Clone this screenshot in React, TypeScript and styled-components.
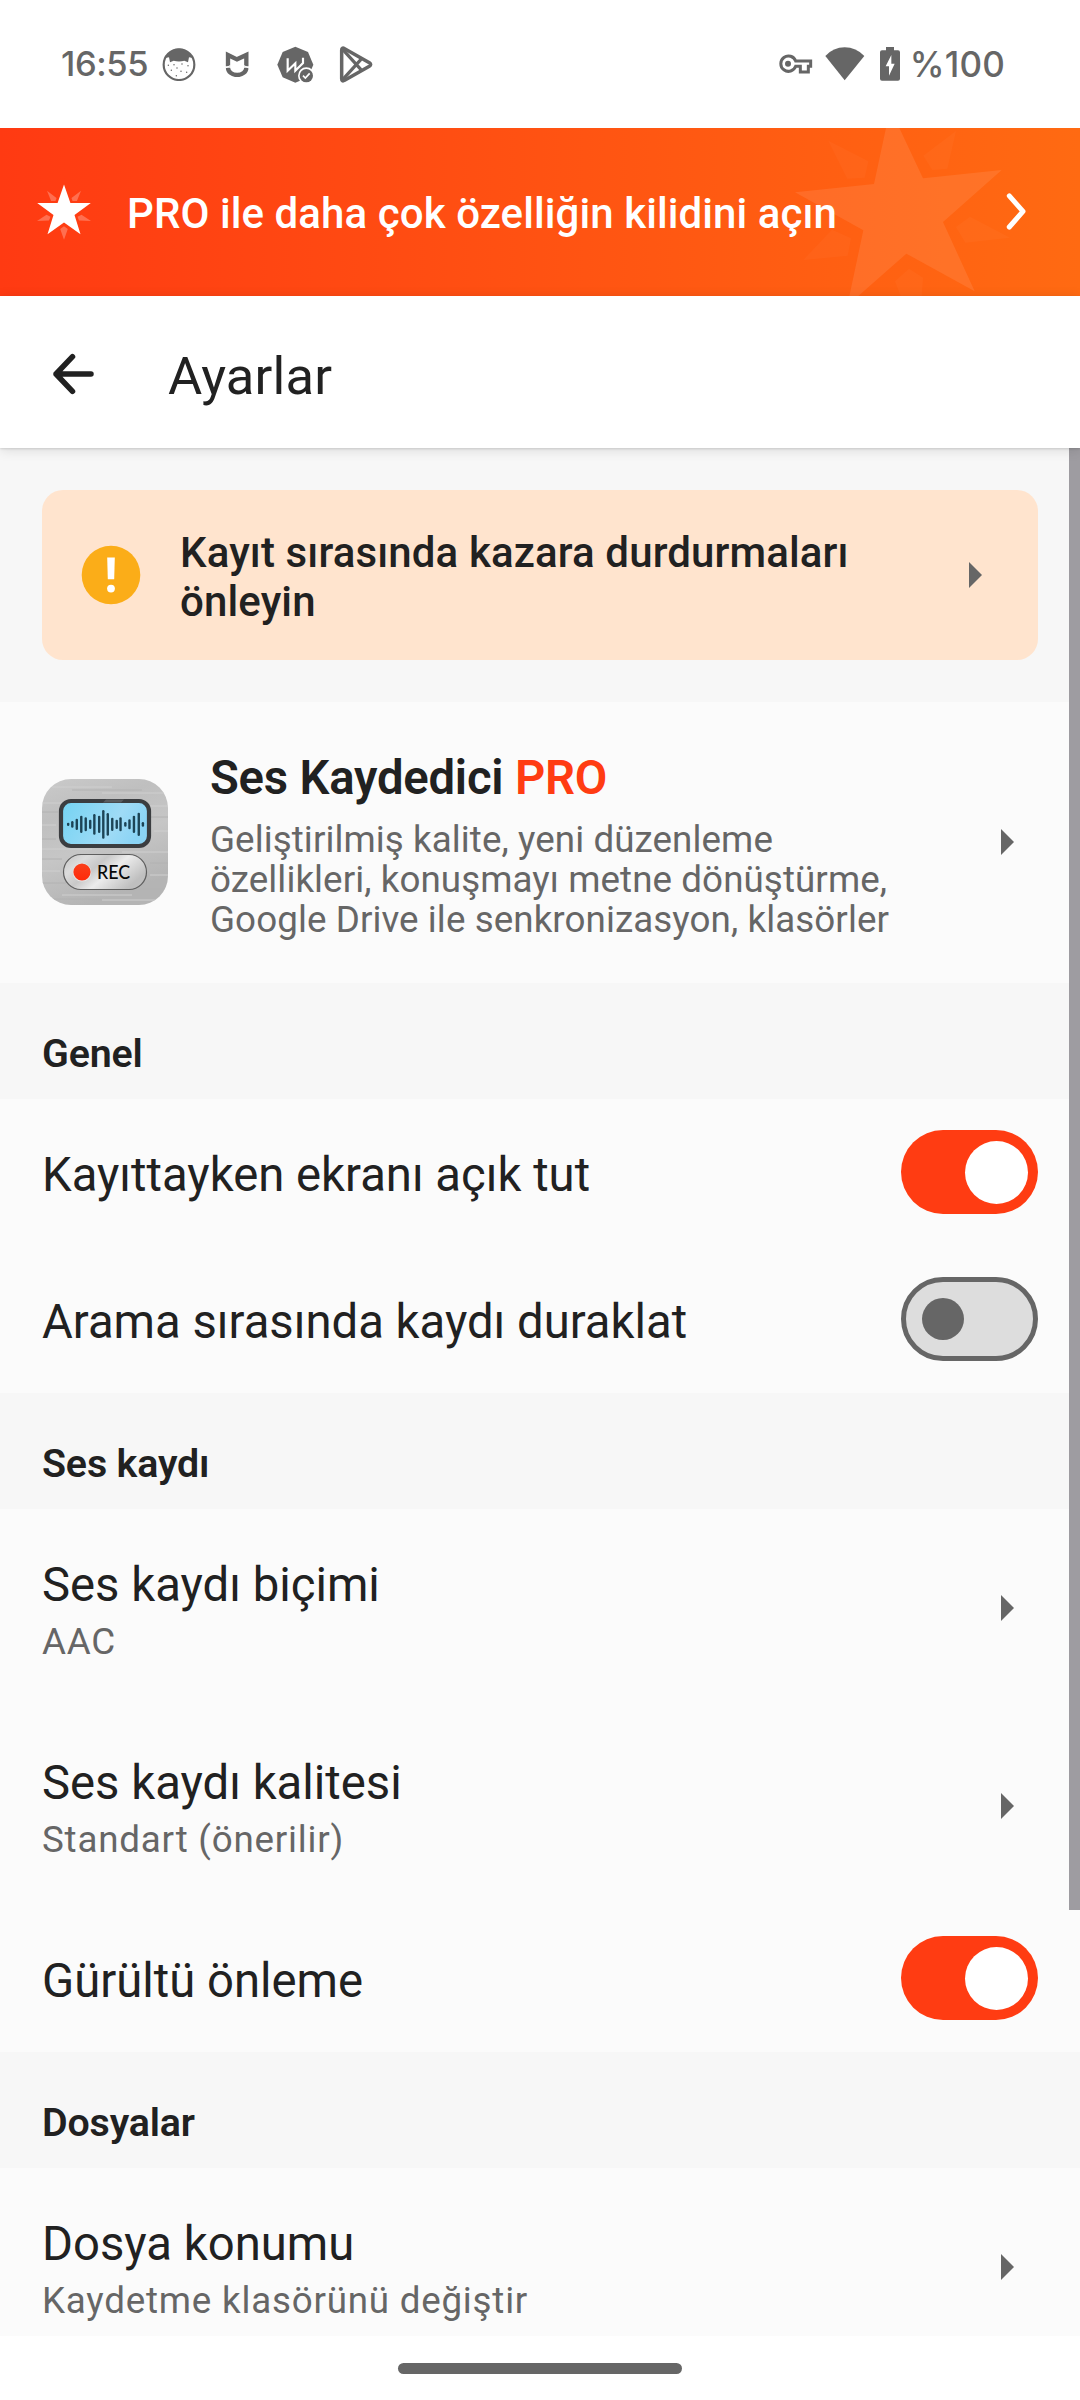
import React from "react";
import styled, { createGlobalStyle } from "styled-components";

const ink = "#212121";
const muted = "#666666";
const accent = "#ff3c12";

const GlobalStyle = createGlobalStyle`
  * { box-sizing: border-box; }
  body { margin: 0; background: #fff; font-family: Roboto, "Noto Sans", sans-serif; }
  svg { display: block; flex: none; }
`;

const Screen = styled.div`
  width: 1080px;
  height: 2400px;
  display: flex;
  flex-direction: column;
  overflow: hidden;
  background: #fff;
`;

const StatusBar = styled.header`
  flex: none;
  height: 128px;
  padding: 0 75px 0 61px;
  display: flex;
  justify-content: space-between;
`;

const StatusSide = styled.div`
  height: 128px;
  display: flex;
  align-items: center;
`;

const StatusText = styled.span<{ $size: number; $spacing: number; $end?: number }>`
  margin-left: ${(p) => (p.$end ? p.$end : 0)}px;
  font-family: Inter, Roboto, sans-serif;
  font-weight: 500;
  font-size: ${(p) => p.$size}px;
  line-height: 42px;
  letter-spacing: ${(p) => p.$spacing}px;
  color: ${muted};
`;

const StatusIcon = styled.svg<{ $gap: number }>`
  margin-left: ${(p) => p.$gap}px;
`;

const Banner = styled.section`
  flex: none;
  position: relative;
  height: 168px;
  overflow: hidden;
  display: flex;
  padding: 0 54px 0 36px;
  background: linear-gradient(90deg, #ff3a12 0%, #ff6a12 100%);
`;

const BannerArt = styled.svg`
  position: absolute;
  top: 0;
  right: 0;
`;

const BannerStar = styled.svg`
  margin-top: 56px;
`;

const BannerText = styled.div`
  flex: 1;
  margin: 61px 0 0 35px;
  font-size: 42px;
  line-height: 50px;
  font-weight: 500;
  letter-spacing: 0.08px;
  color: #fff;
  white-space: nowrap;
`;

const BannerChevron = styled.svg`
  position: relative;
  margin-top: 64px;
`;

const Toolbar = styled.nav`
  flex: none;
  position: relative;
  z-index: 2;
  height: 152px;
  display: flex;
  padding: 0 51px;
  background: #fff;
  box-shadow: 0 1px 2px rgba(0, 0, 0, 0.12), 0 2px 12px rgba(0, 0, 0, 0.12);
`;

const BackIcon = styled.svg`
  margin-top: 56px;
`;

const Title = styled.h1`
  margin: 50px 0 0 73px;
  font-size: 52.5px;
  line-height: 60px;
  font-weight: 400;
  letter-spacing: 0.2px;
  color: ${ink};
`;

const Content = styled.main`
  flex: none;
  position: relative;
  height: 1888px;
  overflow: hidden;
  background: #fbfbfb;
`;

const ScrollThumb = styled.div`
  position: absolute;
  top: 0;
  right: 0;
  width: 11px;
  height: 1462px;
  background: #9e9ca1;
`;

const NoticeArea = styled.div`
  height: 254px;
  padding: 42px 42px 0;
  background: #f7f7f7;
`;

const Notice = styled.div`
  height: 170px;
  border-radius: 21px;
  background: #ffe4ce;
  display: flex;
  align-items: center;
  padding: 0 56px 0 39px;
`;

const NoticeText = styled.div`
  flex: 1;
  margin: 4px 0 0 39px;
  font-size: 42px;
  line-height: 49px;
  font-weight: 500;
  letter-spacing: 0.13px;
  color: ${ink};
`;

const ProRow = styled.div`
  height: 281px;
  display: flex;
  align-items: center;
  padding: 0 66px 1px 42px;
`;

const ProBody = styled.div`
  flex: 1;
  align-self: flex-start;
  padding-top: 48px;
  margin-left: 42px;
`;

const ProTitle = styled.div`
  font-size: 47.25px;
  line-height: 56px;
  font-weight: 600;
  letter-spacing: -0.22px;
  color: ${ink};
`;

const Highlight = styled.span`
  color: ${accent};
`;

const ProText = styled.div`
  margin-top: 14px;
  font-size: 36.75px;
  line-height: 40px;
  letter-spacing: 0.08px;
  color: ${muted};
  white-space: nowrap;
`;

const GroupHeader = styled.h2`
  height: 116px;
  margin: 0;
  padding: 48px 42px 0;
  background: #f7f7f7;
  font-size: 39.375px;
  line-height: 46px;
  font-weight: 600;
  letter-spacing: -0.16px;
  color: ${ink};
`;

const Row = styled.div<{ $height: number; $end: number }>`
  height: ${(p) => p.$height}px;
  display: flex;
  align-items: center;
  padding: 0 ${(p) => p.$end}px 1px 42px;
`;

const RowBody = styled.div`
  flex: 1;
  align-self: flex-start;
  padding-top: 48px;
`;

const RowTitle = styled.div`
  font-size: 47.25px;
  line-height: 56px;
  color: ${ink};
`;

const RowSub = styled.div`
  margin-top: 7px;
  font-size: 36.75px;
  line-height: 44px;
  letter-spacing: 0.78px;
  color: ${muted};
`;

const Track = styled.span<{ $on: boolean }>`
  flex: none;
  width: 137px;
  height: 84px;
  border-radius: 42px;
  display: flex;
  align-items: center;
  justify-content: ${(p) => (p.$on ? "flex-end" : "flex-start")};
  padding: 0 ${(p) => (p.$on ? 10.5 : 16)}px;
  background: ${(p) => (p.$on ? accent : "#dddddd")};
  border: ${(p) => (p.$on ? "none" : `5px solid ${muted}`)};
`;

const Knob = styled.span<{ $on: boolean }>`
  width: ${(p) => (p.$on ? 63 : 42)}px;
  height: ${(p) => (p.$on ? 63 : 42)}px;
  border-radius: 50%;
  background: ${(p) => (p.$on ? "#fff" : muted)};
`;

const NavBar = styled.footer`
  flex: 1;
  display: flex;
  justify-content: center;
  padding-top: 27px;
  background: #fff;
`;

const NavPill = styled.span`
  width: 284px;
  height: 11px;
  border-radius: 5.5px;
  background: ${muted};
`;

const Arrow = () => (
  <svg width="13" height="26" viewBox="0 0 13 26">
    <path d="M0 0L13 13L0 26Z" fill={muted} />
  </svg>
);

const Switch = ({ on }: { on: boolean }) => (
  <Track $on={on}>
    <Knob $on={on} />
  </Track>
);

const CatIcon = () => (
  <StatusIcon $gap={14} width="34" height="34" viewBox="367 51 102 102">
    <circle cx="418" cy="104" r="46" fill="#fff" stroke={muted} strokeWidth="6.5" />
    <path d="M376 84C388 62 404 56 418 56S448 62 460 84L448 82L445 97L434 92C424 95 412 95 402 92L391 97L388 82Z" fill={muted} />
    <g fill={muted}>
      <circle cx="386" cy="106" r="2.2" /><circle cx="403" cy="104" r="2.2" /><circle cx="427" cy="102" r="2.2" />
      <circle cx="445" cy="107" r="2.2" /><circle cx="395" cy="121" r="2.2" /><circle cx="412" cy="114" r="2.2" />
      <circle cx="424" cy="124" r="2.2" /><circle cx="441" cy="127" r="2.2" /><circle cx="410" cy="137" r="2.2" />
    </g>
  </StatusIcon>
);

const MiIcon = () => (
  <StatusIcon $gap={29} width="24" height="26" viewBox="555 63 72 78">
    <path d="M564 109V75L591 88L619 75V109" fill="none" stroke={muted} strokeWidth="13" />
    <path d="M564 113A27.500 22 0 0 0 619 113" fill="none" stroke={muted} strokeWidth="13" />
    <path d="M556 114L572 106M610 106L627 114" stroke="#fff" strokeWidth="3" />
  </StatusIcon>
);

const WIcon = () => (
  <StatusIcon $gap={28} width="37" height="37" viewBox="710 49 111 111">
    <path d="M765 51L803 67L819 105L803 143L765 159L727 143L711 105L727 67Z" fill={muted} />
    <path d="M742 86V123L765 101V123L788 100V84" fill="none" stroke="#fff" strokeWidth="6.5" />
    <circle cx="798" cy="138" r="25" fill="#fff" />
    <circle cx="798" cy="138" r="20" fill={muted} />
    <path d="M788 138L795 145L808 131" fill="none" stroke="#fff" strokeWidth="5" />
  </StatusIcon>
);

const PlayIcon = () => (
  <StatusIcon $gap={25} width="35" height="37" viewBox="896 49 105 111">
    <path d="M904 62V147Q904 157 913 152L987 110Q995 105 987 99L913 57Q904 52 904 62Z" fill="none" stroke={muted} strokeWidth="10.500" />
    <path d="M907 150L962 89M907 59L962 120" fill="none" stroke={muted} strokeWidth="9.500" />
  </StatusIcon>
);

const KeyIcon = () => (
  <svg width="34" height="20" viewBox="57 74 102 60">
    <path d="M107 95H152V111H145V128H121V111H107A23 23 0 1 1 107 95Z" fill="none" stroke={muted} strokeWidth="9" />
    <circle cx="84" cy="103" r="9" fill={muted} />
  </svg>
);

const WifiIcon = () => (
  <StatusIcon $gap={12} width="40" height="34" viewBox="194 49 120 102">
    <path d="M195 76Q219 50 253 50T312 76L253 149Z" fill={muted} />
  </StatusIcon>
);

const BatteryIcon = () => (
  <StatusIcon $gap={15} width="20" height="34" viewBox="360 48 60 102">
    <path d="M378 48H402V58H414Q420 58 420 64V143Q420 149 414 149H366Q360 149 360 143V64Q360 58 366 58H378Z" fill={muted} />
    <path d="M394 72L377 106H387V134L404 98H394Z" fill="#fff" />
  </StatusIcon>
);

/* Waveform bars on the recorder display: position and half height. */
const WAVE: [number, number][] = [
  [198, 5], [210, 10], [223, 17], [236, 26], [249, 21], [262, 14], [274, 31], [288, 26], [300, 43],
  [313, 34], [326, 20], [339, 14], [350, 21], [364, 7], [376, 15], [389, 26], [403, 35], [415, 7],
];

const AppIcon = () => (
  <svg width="126" height="126" viewBox="0 0 126 126">
    <defs>
      <linearGradient id="metal" x1="0" y1="0" x2="0.35" y2="1">
        <stop offset="0" stopColor="#cacaca" />
        <stop offset="0.3" stopColor="#bfbfbf" />
        <stop offset="0.6" stopColor="#c6c6c6" />
        <stop offset="1" stopColor="#b4b4b4" />
      </linearGradient>
      <linearGradient id="screen" x1="0" y1="0" x2="1" y2="0.3">
        <stop offset="0" stopColor="#74d3f2" />
        <stop offset="0.7" stopColor="#9fdbf6" />
        <stop offset="1" stopColor="#8bd4f5" />
      </linearGradient>
      <linearGradient id="button" x1="0" y1="0" x2="1" y2="0.5">
        <stop offset="0" stopColor="#c4c4c4" />
        <stop offset="0.25" stopColor="#dcdcdc" />
        <stop offset="0.45" stopColor="#c8c8c8" />
        <stop offset="0.65" stopColor="#ececec" />
        <stop offset="1" stopColor="#bfbfbf" />
      </linearGradient>
      <linearGradient id="dot" x1="0" y1="0" x2="0" y2="1">
        <stop offset="0" stopColor="#f9401c" />
        <stop offset="1" stopColor="#ff2a0a" />
      </linearGradient>
      <clipPath id="tile"><rect width="126" height="126" rx="29" /></clipPath>
    </defs>
    <g clipPath="url(#tile)">
      <rect width="126" height="126" fill="url(#metal)" />
      <path d="M10 8H70M60 14H126M0 24H30M88 27H126M0 46H14M112 52H126M0 70H50M80 73H126M0 92H18M108 96H126M20 116H90M60 121H126" stroke="#cfcfcf" strokeWidth="1" />
      <path d="M30 11H100M0 33H16M100 38H126M0 60H14M0 80H20M108 84H126M0 104H24M90 110H126M10 120H60" stroke="#b2b2b2" strokeWidth="1" />
    </g>
    <rect x="19" y="22" width="88" height="45" rx="10" fill="url(#screen)" stroke="#3b3d40" strokeWidth="4.2" />
    <path d="M64 20.500H82L79 23.500H61Z" fill="#5a5c5f" />
    {WAVE.map(([x, h]) => (
      <rect key={x} x={x / 2.904 - 43.2} y={45.3 - h / 3} width="2.4" height={(h * 2) / 3} rx="1.200" fill="#1c4456" />
    ))}
    <rect x="21.500" y="75.500" width="83" height="35" rx="17.500" fill="url(#button)" stroke="#5e5e5e" strokeWidth="1.200" />
    <circle cx="40" cy="93.300" r="9.300" fill="#e6e6e6" />
    <circle cx="40" cy="93" r="8.600" fill="url(#dot)" />
    <text x="55" y="99.500" fontFamily="Lato, sans-serif" fontWeight="500" fontSize="18.500" textLength="33" lengthAdjust="spacingAndGlyphs" fill="#080808">REC</text>
  </svg>
);

export default function App() {
  return (
    <Screen>
      <GlobalStyle />
      <StatusBar>
        <StatusSide>
          <StatusText $size={34.5} $spacing={-0.4}>16:55</StatusText>
          <CatIcon />
          <MiIcon />
          <WIcon />
          <PlayIcon />
        </StatusSide>
        <StatusSide>
          <KeyIcon />
          <WifiIcon />
          <BatteryIcon />
          <StatusText $size={35} $spacing={0.2} $end={10}>%100</StatusText>
        </StatusSide>
      </StatusBar>

      <Banner>
        <BannerArt width="340" height="168" viewBox="0 24 1020 504">
          <path d="M450.500 -34.500L549 175L785 150L609 306L704 514L499 401L322 557L370 331L165 217L402 192Z" fill="#fff" opacity="0.09" />
          <g fill="#fff" opacity="0.022">
            <path d="M265 62L385 124L374 173L322 176Z" />
            <path d="M648 33L622 146L577 150L550 107Z" />
            <path d="M690 290L810 353L676 368L648 321Z" />
            <path d="M190 420L276 329L333 355L323 407Z" />
            <path d="M507 446L549 473L545 528L482 528L465 484Z" />
          </g>
        </BannerArt>
        <BannerStar width="56" height="56" viewBox="35.500 184 56 56">
          <path d="M63.500 184.500L69.900 203H90.300L74 215L80 234.200L63.500 222.400L47 234.200L53 215L36.700 203H57.100Z" fill="#fff" />
          <g fill="#fff" opacity="0.26">
            <path d="M46.500 190.700L56 198L55 201H50.600Z" />
            <path d="M80.500 190.700L71 198L72 201H76.400Z" />
            <path d="M36.500 221L46 214.700L50 216.700L48.500 220.500Z" />
            <path d="M90.500 221L81 214.700L77 216.700L78.500 220.500Z" />
            <path d="M63.500 239.700L59.700 229L63.500 226.300L67.300 229Z" />
          </g>
        </BannerStar>
        <BannerText>PRO ile daha çok özelliğin kilidini açın</BannerText>
        <BannerChevron width="20" height="40" viewBox="1006 192 20 40">
          <path d="M1009.300 195.800L1023 211.400L1009.300 227" fill="none" stroke="#fff" strokeWidth="5" strokeLinecap="round" strokeLinejoin="round" />
        </BannerChevron>
      </Banner>

      <Toolbar>
        <BackIcon width="44" height="44" viewBox="51.500 352 44 44">
          <path d="M91.500 374H56.500M73 356.700L56.500 374L73 391.300" fill="none" stroke={ink} strokeWidth="5.500" strokeLinecap="round" strokeLinejoin="round" />
        </BackIcon>
        <Title>Ayarlar</Title>
      </Toolbar>

      <Content>
        <NoticeArea>
          <Notice>
            <svg width="60" height="60" viewBox="0 0 60 60">
              <circle cx="30" cy="30" r="29.300" fill="#fbad18" />
              <path d="M26.200 12.500H33.800L33.200 34.300H26.800Z" fill="#fff" />
              <circle cx="30" cy="43.600" r="3.900" fill="#fff" />
            </svg>
            <NoticeText>
              Kayıt sırasında kazara durdurmaları
              <br />
              önleyin
            </NoticeText>
            <Arrow />
          </Notice>
        </NoticeArea>

        <ProRow>
          <AppIcon />
          <ProBody>
            <ProTitle>
              Ses Kaydedici <Highlight>PRO</Highlight>
            </ProTitle>
            <ProText>
              Geliştirilmiş kalite, yeni düzenleme
              <br />
              özellikleri, konuşmayı metne dönüştürme,
              <br />
              Google Drive ile senkronizasyon, klasörler
            </ProText>
          </ProBody>
          <Arrow />
        </ProRow>

        <GroupHeader>Genel</GroupHeader>
        <Row $height={147} $end={42}>
          <RowBody><RowTitle>Kayıttayken ekranı açık tut</RowTitle></RowBody>
          <Switch on />
        </Row>
        <Row $height={147} $end={42}>
          <RowBody><RowTitle>Arama sırasında kaydı duraklat</RowTitle></RowBody>
          <Switch on={false} />
        </Row>

        <GroupHeader>Ses kaydı</GroupHeader>
        <Row $height={198} $end={66}>
          <RowBody>
            <RowTitle>Ses kaydı biçimi</RowTitle>
            <RowSub>AAC</RowSub>
          </RowBody>
          <Arrow />
        </Row>
        <Row $height={198} $end={66}>
          <RowBody>
            <RowTitle>Ses kaydı kalitesi</RowTitle>
            <RowSub>Standart (önerilir)</RowSub>
          </RowBody>
          <Arrow />
        </Row>
        <Row $height={147} $end={42}>
          <RowBody><RowTitle>Gürültü önleme</RowTitle></RowBody>
          <Switch on />
        </Row>

        <GroupHeader>Dosyalar</GroupHeader>
        <Row $height={198} $end={66}>
          <RowBody>
            <RowTitle>Dosya konumu</RowTitle>
            <RowSub>Kaydetme klasörünü değiştir</RowSub>
          </RowBody>
          <Arrow />
        </Row>
        <ScrollThumb />
      </Content>

      <NavBar>
        <NavPill />
      </NavBar>
    </Screen>
  );
}
